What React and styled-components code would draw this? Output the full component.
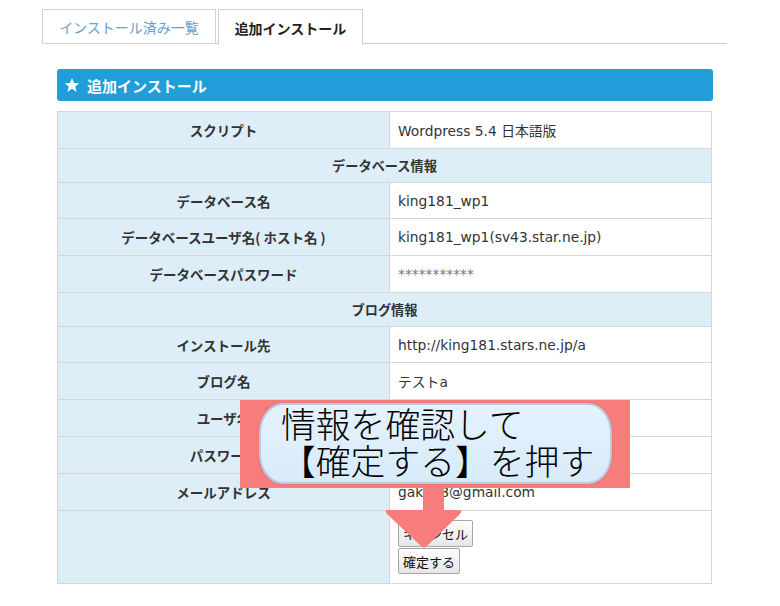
import React from "react";
import styled, { createGlobalStyle } from "styled-components";

const Global = createGlobalStyle`
  html, body { margin: 0; padding: 0; background: #fff; }
  body { font-family: "Noto Sans", "Noto Sans CJK JP", sans-serif; }
`;

const Page = styled.div`
  position: relative;
  width: 780px;
  height: 606px;
  padding: 9px 0 0 42px;
  box-sizing: border-box;
  overflow: hidden;
`;

const Frame = styled.div`
  width: 685px;
`;

const TabBar = styled.div`
  display: flex;
  gap: 2px;
  border-bottom: 1px solid #cccccc;
  height: 35px;
  box-sizing: border-box;
`;

const Tab = styled.div`
  display: flex;
  align-items: center;
  justify-content: center;
  box-sizing: border-box;
  width: ${(p) => p.$w}px;
  height: ${(p) => (p.$active ? 36 : 35)}px;
  border: 1px solid #d2d2d2;
  border-bottom: ${(p) => (p.$active ? "none" : "1px solid #d2d2d2")};
  background: #fff;
  font-family: "Noto Sans CJK JP", sans-serif;
  font-size: 14px;
  font-weight: ${(p) => (p.$active ? 700 : 400)};
  color: ${(p) => (p.$active ? "#222" : "#64a2cb")};
  padding-top: 1px;
`;

const Content = styled.div`
  padding: 25px 14px 0 15px;
`;

const Heading = styled.div`
  display: flex;
  align-items: center;
  gap: 7px;
  height: 32px;
  background: #229dd9;
  border-radius: 3px;
  padding: 0 0 0 7px;
  color: #fff;
  font-family: "Noto Sans CJK JP", sans-serif;
  font-weight: 700;
  font-size: 15px;
`;

const Table = styled.table`
  margin-top: 10px;
  width: 655px;
  border-collapse: collapse;
  font-size: 13px;
  color: #333;
`;

const Row = styled.tr`
  height: ${(p) => p.$h}px;
`;

const Label = styled.th`
  width: 331px;
  background: #ddeef9;
  border: 1px solid #d6d6d6;
  font-family: "Noto Sans CJK JP", sans-serif;
  font-weight: 700;
  font-size: 13.5px;
  color: #333;
  text-align: center;
  padding: 0;
`;

const Section = styled.th`
  background: #ddeef9;
  border: 1px solid #d6d6d6;
  font-family: "Noto Sans CJK JP", sans-serif;
  font-weight: 700;
  font-size: 13.2px;
  color: #333;
  text-align: center;
  padding: 0;
`;

const Value = styled.td`
  border: 1px solid #d6d6d6;
  padding: 0 0 0 8px;
  font-family: "DejaVu Sans", "Noto Sans CJK JP", sans-serif;
  font-size: 13.8px;
  color: ${(p) => (p.$muted ? "#777" : "#333")};
  vertical-align: ${(p) => (p.$top ? "top" : "middle")};
`;

const ButtonStack = styled.div`
  display: flex;
  flex-direction: column;
  align-items: flex-start;
  gap: 1px;
  padding-top: 9px;
`;

const Button = styled.button`
  height: ${(p) => p.$h}px;
  padding: 0 4px;
  border: 1px solid #a6a6a6;
  border-radius: 2px;
  background: linear-gradient(#fdfdfd, #e6e6e6);
  font-family: "Noto Sans CJK JP", sans-serif;
  font-size: 13px;
  color: #111;
  cursor: pointer;
`;

const Callout = styled.div`
  position: absolute;
  left: 240px;
  top: 400px;
  width: 390px;
  height: 88px;
  background: #f77c7c;
  box-sizing: border-box;
  padding: 3px 18px 4px 19px;
`;

const Bubble = styled.div`
  height: 100%;
  box-sizing: border-box;
  border-radius: 24px / 30px;
  background: linear-gradient(#e4f2fd, #d8ebf9);
  border: 2px solid #b9cbe0;
  box-shadow: 0 0 2px #e06b6b;
  padding: 0 0 0 20px;
  font-family: "Noto Sans CJK JP", sans-serif;
  font-weight: 300;
  font-size: 34.8px;
  line-height: 37px;
  color: #000;
  white-space: nowrap;
  letter-spacing: 0;
`;

const Arrow = styled.svg`
  position: absolute;
  left: 380px;
  top: 486px;
`;

const Star = () => (
  <svg width="16" height="16" viewBox="0 0 24 24">
    <polygon
      fill="#fff"
      points="12,1.5 15,9 23,9.2 16.8,14.2 19,22.5 12,17.8 5,22.5 7.2,14.2 1,9.2 9,9"
    />
  </svg>
);

const rows = [
  { type: "row", label: "スクリプト", value: "Wordpress 5.4 日本語版", h: 37 },
  { type: "section", label: "データベース情報", h: 34 },
  { type: "row", label: "データベース名", value: "king181_wp1", h: 36 },
  { type: "row", label: "データベースユーザ名( ホスト名 )", value: "king181_wp1(sv43.star.ne.jp)", h: 37 },
  { type: "row", label: "データベースパスワード", value: "***********", h: 37, muted: true },
  { type: "section", label: "ブログ情報", h: 34 },
  { type: "row", label: "インストール先", value: "http://king181.stars.ne.jp/a", h: 36 },
  { type: "row", label: "ブログ名", value: "テストa", h: 37 },
  { type: "row", label: "ユーザ名", value: "king181", h: 37 },
  { type: "row", label: "パスワード", value: "********", h: 37, muted: true },
  { type: "row", label: "メールアドレス", value: "gaku08@gmail.com", h: 37 },
];

export default function App() {
  return (
    <>
      <Global />
      <Page>
        <Frame>
          <TabBar>
            <Tab $w={174}>インストール済み一覧</Tab>
            <Tab $w={145} $active>追加インストール</Tab>
          </TabBar>
          <Content>
            <Heading>
              <Star />
              追加インストール
            </Heading>
            <Table>
              <tbody>
                {rows.map((r, i) =>
                  r.type === "section" ? (
                    <Row key={i} $h={r.h}>
                      <Section colSpan={2}>{r.label}</Section>
                    </Row>
                  ) : (
                    <Row key={i} $h={r.h}>
                      <Label>{r.label}</Label>
                      <Value $muted={r.muted}>{r.value}</Value>
                    </Row>
                  )
                )}
                <Row $h={73}>
                  <Label />
                  <Value $top>
                    <ButtonStack>
                      <Button $h={27}>キャンセル</Button>
                      <Button $h={26}>確定する</Button>
                    </ButtonStack>
                  </Value>
                </Row>
              </tbody>
            </Table>
          </Content>
        </Frame>
        <Callout>
          <Bubble>
            情報を確認して
            <br />
            【確定する】を押す
          </Bubble>
        </Callout>
        <Arrow width="90" height="66" viewBox="0 0 90 66">
          <rect x="43" y="0" width="21" height="28" fill="#f77c7c" />
          <path
            d="M8 24 Q4 24 7 28 L41 60 Q44 63 47 60 L80 28 Q83 24 79 24 Z"
            fill="#f77c7c"
          />
        </Arrow>
      </Page>
    </>
  );
}
